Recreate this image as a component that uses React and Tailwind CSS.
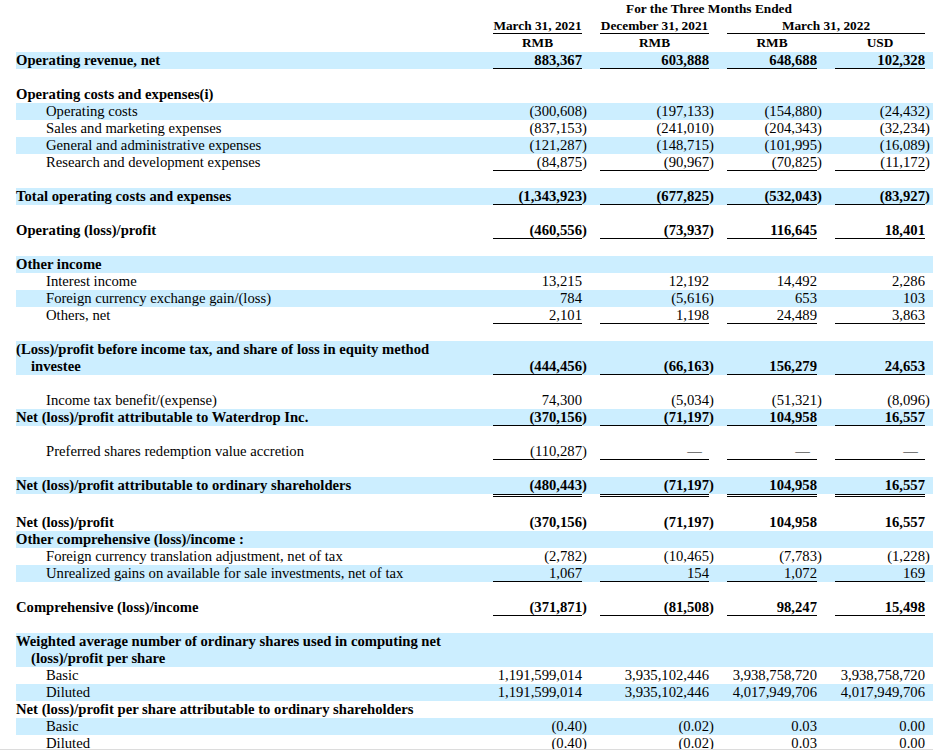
import React from "react";

const W = ["w-[89px]", "w-[109px]", "w-[90px]", "w-[90px]"];

const rows = [
  { label: "Operating revenue, net", b: 1, hl: 1, v: ["883,367", "603,888", "648,688", "102,328"], u: "s" },
  { blank: 17 },
  { label: "Operating costs and expenses(i)", b: 1 },
  { label: "Operating costs", ind: 1, hl: 1, v: ["(300,608)", "(197,133)", "(154,880)", "(24,432)"] },
  { label: "Sales and marketing expenses", ind: 1, v: ["(837,153)", "(241,010)", "(204,343)", "(32,234)"] },
  { label: "General and administrative expenses", ind: 1, hl: 1, v: ["(121,287)", "(148,715)", "(101,995)", "(16,089)"] },
  { label: "Research and development expenses", ind: 1, v: ["(84,875)", "(90,967)", "(70,825)", "(11,172)"], u: "s" },
  { blank: 17 },
  { label: "Total operating costs and expenses", b: 1, hl: 1, v: ["(1,343,923)", "(677,825)", "(532,043)", "(83,927)"], u: "s" },
  { blank: 17 },
  { label: "Operating (loss)/profit", b: 1, v: ["(460,556)", "(73,937)", "116,645", "18,401"], u: "s" },
  { blank: 17 },
  { label: "Other income", b: 1, hl: 1 },
  { label: "Interest income", ind: 1, v: ["13,215", "12,192", "14,492", "2,286"] },
  { label: "Foreign currency exchange gain/(loss)", ind: 1, hl: 1, v: ["784", "(5,616)", "653", "103"] },
  { label: "Others, net", ind: 1, v: ["2,101", "1,198", "24,489", "3,863"], u: "s" },
  { blank: 17 },
  {
    label: ["(Loss)/profit before income tax, and share of loss in equity method", "investee"],
    b: 1,
    hl: 1,
    v: ["(444,456)", "(66,163)", "156,279", "24,653"],
    u: "s",
  },
  { blank: 17 },
  { label: "Income tax benefit/(expense)", ind: 1, v: ["74,300", "(5,034)", "(51,321)", "(8,096)"] },
  { label: "Net (loss)/profit attributable to Waterdrop Inc.", b: 1, hl: 1, v: ["(370,156)", "(71,197)", "104,958", "16,557"], u: "s" },
  { blank: 17 },
  { label: "Preferred shares redemption value accretion", ind: 1, v: ["(110,287)", "—", "—", "—"], u: "s" },
  { blank: 17 },
  { label: "Net (loss)/profit attributable to ordinary shareholders", b: 1, hl: 1, v: ["(480,443)", "(71,197)", "104,958", "16,557"], u: "d" },
  { blank: 20 },
  { label: "Net (loss)/profit", b: 1, v: ["(370,156)", "(71,197)", "104,958", "16,557"] },
  { label: "Other comprehensive (loss)/income :", b: 1, hl: 1 },
  { label: "Foreign currency translation adjustment, net of tax", ind: 1, v: ["(2,782)", "(10,465)", "(7,783)", "(1,228)"] },
  { label: "Unrealized gains on available for sale investments, net of tax", ind: 1, hl: 1, v: ["1,067", "154", "1,072", "169"], u: "s" },
  { blank: 17 },
  { label: "Comprehensive (loss)/income", b: 1, v: ["(371,871)", "(81,508)", "98,247", "15,498"], u: "s" },
  { blank: 17 },
  { label: ["Weighted average number of ordinary shares used in computing net", "(loss)/profit per share"], b: 1, hl: 1 },
  { label: "Basic", ind: 1, v: ["1,191,599,014", "3,935,102,446", "3,938,758,720", "3,938,758,720"] },
  { label: "Diluted", ind: 1, hl: 1, v: ["1,191,599,014", "3,935,102,446", "4,017,949,706", "4,017,949,706"] },
  { label: "Net (loss)/profit per share attributable to ordinary shareholders", b: 1 },
  { label: "Basic", ind: 1, hl: 1, v: ["(0.40)", "(0.02)", "0.03", "0.00"] },
  { label: "Diluted", ind: 1, v: ["(0.40)", "(0.02)", "0.03", "0.00"] },
];

function Val({ v, w, u, last }) {
  const has = v !== undefined;
  const paren = has && v.endsWith(")");
  const main = has ? (paren ? v.slice(0, -1) : v) : "";
  const dash = v === "—";
  const line =
    has && u === "s"
      ? "h-[17px] border-b border-black"
      : has && u === "d"
      ? "h-[20px] border-b-[3px] border-double border-black"
      : "h-[17px]";
  return (
    <>
      <div className={`${w} shrink-0 whitespace-nowrap text-right ${line} ${dash ? "pr-[7px]" : ""}`}>{main}</div>
      <div className="w-[5px] shrink-0 h-[17px] whitespace-nowrap">{paren ? ")" : ""}</div>
      {!last && <div className="w-[13px] shrink-0" />}
    </>
  );
}

function Row({ r }) {
  if (r.blank) {
    return <div className={r.blank === 20 ? "h-[20px]" : "h-[17px]"} />;
  }
  const two = Array.isArray(r.label);
  return (
    <div
      className={`flex w-[917px] ${two ? "h-[34px] items-end" : "h-[17px] items-start"} ${
        r.hl ? "bg-[#cceeff]" : ""
      } ${r.b ? "font-bold" : ""}`}
    >
      <div className={`w-[477px] shrink-0 self-start whitespace-nowrap ${r.ind ? "pl-[30px]" : ""}`}>
        {two ? (
          <>
            <div>{r.label[0]}</div>
            <div className="pl-[15px]">{r.label[1]}</div>
          </>
        ) : (
          r.label
        )}
      </div>
      {r.v &&
        r.v.map((v, i) => <Val key={i} v={v} w={W[i]} u={r.u} last={i === 3} />)}
    </div>
  );
}

export default function App() {
  return (
    <div className="h-[753px] w-[933px] overflow-hidden bg-white">
      <div
        className="h-[750px] overflow-hidden border-b border-[#dcdcdc] pl-[16px] text-[14.67px] leading-[17px] text-black"
        style={{ fontFamily: '"Liberation Serif", "Times New Roman", serif' }}
      >
        {/* header */}
        <div className="text-[13.33px]">
          <div className="flex h-[17px] w-[917px] font-bold">
            <div className="w-[477px] shrink-0" />
            <div className="w-[432px] shrink-0 text-center whitespace-nowrap">For the Three Months Ended</div>
          </div>
          <div className="flex h-[17px] w-[917px] font-bold">
            <div className="w-[477px] shrink-0" />
            <div className="w-[89px] shrink-0 border-b border-black text-center whitespace-nowrap">March 31, 2021</div>
            <div className="w-[18px] shrink-0" />
            <div className="w-[109px] shrink-0 border-b border-black text-center whitespace-nowrap">December 31, 2021</div>
            <div className="w-[18px] shrink-0" />
            <div className="w-[198px] shrink-0 border-b border-black text-center whitespace-nowrap">March 31, 2022</div>
          </div>
          <div className="flex h-[18px] w-[917px] font-bold">
            <div className="w-[477px] shrink-0" />
            <div className="w-[89px] shrink-0 text-center">RMB</div>
            <div className="w-[18px] shrink-0" />
            <div className="w-[109px] shrink-0 text-center">RMB</div>
            <div className="w-[18px] shrink-0" />
            <div className="w-[90px] shrink-0 text-center">RMB</div>
            <div className="w-[18px] shrink-0" />
            <div className="w-[90px] shrink-0 text-center">USD</div>
          </div>
        </div>
        {rows.map((r, i) => (
          <Row key={i} r={r} />
        ))}
      </div>
    </div>
  );
}
